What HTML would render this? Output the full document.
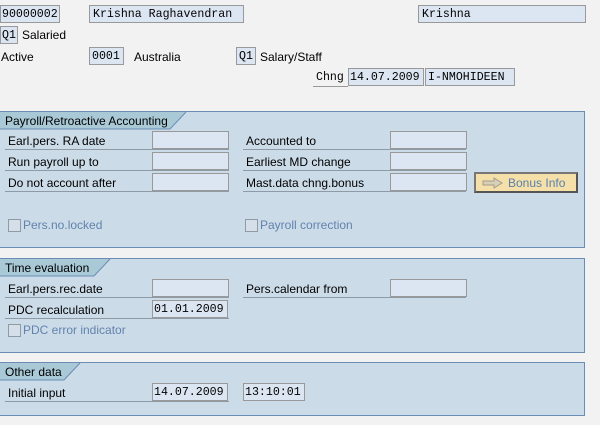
<!DOCTYPE html>
<html><head><style>
body{margin:0;width:600px;height:425px;background:#f2f2f2;position:relative;overflow:hidden;font-family:"Liberation Sans",Arial,sans-serif;font-size:12px;color:#000}
.a{position:absolute}
.f{position:absolute;height:15px;padding-top:1px;background:#dce6f3;border:1px solid #999;box-sizing:content-box;font-family:"Liberation Mono",monospace;font-size:11.6px;line-height:16px;padding-left:2px;white-space:nowrap;overflow:hidden}
.t{position:absolute;white-space:nowrap;line-height:14px}
.p{position:absolute;left:0;width:584px;background:#ccdbe8;border-top:1px solid #6b8db5;border-bottom:1px solid #6b8db5;border-right:1px solid #6b8db5}
.tab{position:absolute;left:0;top:0;height:17px}
.tab svg{position:absolute;left:0;top:0}
.tab span{position:absolute;left:5px;top:2px;line-height:14px;white-space:nowrap}
.lb{position:absolute;height:18px;border-bottom:1px solid #8e9aa6}
.lb span{position:absolute;left:3px;top:3px;line-height:14px;white-space:nowrap}
.cb{position:absolute;width:11px;height:11px;border:1px solid #8f9aa5;background:#d5dfe9}
.cl{position:absolute;color:#6283ad;white-space:nowrap;line-height:14px}
</style></head><body>
<div class="f" style="left:0;top:5px;width:57px;padding-left:1px">90000002</div>
<div class="f" style="left:89px;top:5px;width:150px;padding-left:3px">Krishna Raghavendran</div>
<div class="f" style="left:418px;top:5px;width:163px;padding-left:3px">Krishna</div>
<div class="f" style="left:0;top:26px;width:15px;padding-left:1px">Q1</div>
<div class="t" style="left:22px;top:28px">Salaried</div>
<div class="t" style="left:1px;top:50px">Active</div>
<div class="f" style="left:89px;top:47px;width:31px;padding-left:2px">0001</div>
<div class="t" style="left:134px;top:50px">Australia</div>
<div class="f" style="left:236px;top:47px;width:16px;padding-left:2px">Q1</div>
<div class="t" style="left:260px;top:50px">Salary/Staff</div>
<div class="a" style="left:313px;top:68px;width:35px;height:18px;border-bottom:1px solid #999"><span style="position:absolute;left:3px;top:3px;font-family:'Liberation Mono',monospace;font-size:11.6px">Chng</span></div>
<div class="f" style="left:348px;top:68px;width:73px;padding-left:1px">14.07.2009</div>
<div class="f" style="left:425px;top:68px;width:86px;padding-left:2px">I-NMOHIDEEN</div>

<div class="p" style="top:111px;height:135px">
 <div class="tab"><svg width="190" height="18"><polygon points="0,0 186,0 170,17 0,17" fill="#a9c9d6"/><line x1="170" y1="17" x2="186" y2="0" stroke="#6b8db5"/><line x1="0" y1="17" x2="170" y2="17" stroke="#6b8db5"/></svg><span>Payroll/Retroactive Accounting</span></div>
 <div class="lb" style="left:5px;top:19px;width:224px"><span>Earl.pers. RA date</span></div>
 <div class="f" style="left:152px;top:19px;width:73px"></div>
 <div class="lb" style="left:5px;top:40px;width:224px"><span>Run payroll up to</span></div>
 <div class="f" style="left:152px;top:40px;width:73px"></div>
 <div class="lb" style="left:5px;top:61px;width:224px"><span>Do not account after</span></div>
 <div class="f" style="left:152px;top:61px;width:73px"></div>
 <div class="lb" style="left:243px;top:19px;width:223px"><span>Accounted to</span></div>
 <div class="f" style="left:390px;top:19px;width:73px"></div>
 <div class="lb" style="left:243px;top:40px;width:223px"><span>Earliest MD change</span></div>
 <div class="f" style="left:390px;top:40px;width:73px"></div>
 <div class="lb" style="left:243px;top:61px;width:223px"><span>Mast.data chng.bonus</span></div>
 <div class="f" style="left:390px;top:61px;width:73px"></div>
 <div class="a" style="left:474px;top:60px;width:100px;height:17px;background:#f5e0a9;border:2px solid #555;border-top-color:#777;border-left-color:#777">
  <svg class="a" style="left:6px;top:3px" width="22" height="12"><polygon points="1,4 12,4 12,1 20,6 12,11 12,8 1,8" fill="#d8d0b8" stroke="#a49c86"/></svg>
  <span class="a" style="left:32px;top:2px;color:#5a7fae;white-space:nowrap">Bonus Info</span></div>
 <div class="cb" style="left:8px;top:107px"></div><div class="cl" style="left:23px;top:106px">Pers.no.locked</div>
 <div class="cb" style="left:245px;top:107px"></div><div class="cl" style="left:260px;top:106px">Payroll correction</div>
</div>

<div class="p" style="top:258px;height:93px">
 <div class="tab"><svg width="115" height="18"><polygon points="0,0 110,0 94,17 0,17" fill="#a9c9d6"/><line x1="94" y1="17" x2="110" y2="0" stroke="#6b8db5"/><line x1="0" y1="17" x2="94" y2="17" stroke="#6b8db5"/></svg><span>Time evaluation</span></div>
 <div class="lb" style="left:5px;top:20px;width:224px"><span>Earl.pers.rec.date</span></div>
 <div class="f" style="left:152px;top:20px;width:73px"></div>
 <div class="lb" style="left:5px;top:41px;width:224px"><span>PDC recalculation</span></div>
 <div class="f" style="left:152px;top:41px;width:73px;padding-left:1px">01.01.2009</div>
 <div class="lb" style="left:243px;top:20px;width:223px"><span>Pers.calendar from</span></div>
 <div class="f" style="left:390px;top:20px;width:73px"></div>
 <div class="cb" style="left:8px;top:65px"></div><div class="cl" style="left:23px;top:64px">PDC error indicator</div>
</div>

<div class="p" style="top:362px;height:52px">
 <div class="tab"><svg width="85" height="18"><polygon points="0,0 80,0 64,17 0,17" fill="#a9c9d6"/><line x1="64" y1="17" x2="80" y2="0" stroke="#6b8db5"/><line x1="0" y1="17" x2="64" y2="17" stroke="#6b8db5"/></svg><span>Other data</span></div>
 <div class="lb" style="left:5px;top:20px;width:224px"><span>Initial input</span></div>
 <div class="f" style="left:152px;top:20px;width:73px;padding-left:1px">14.07.2009</div>
 <div class="f" style="left:243px;top:20px;width:59px;padding-left:1px">13:10:01</div>
</div>
</body></html>
